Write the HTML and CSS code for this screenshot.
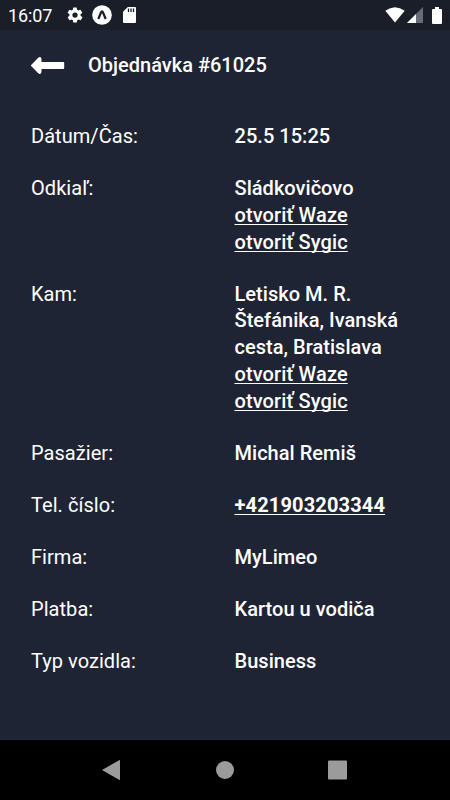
FILE: index.html
```html
<!DOCTYPE html>
<html lang="sk">
<head>
<meta charset="utf-8">
<title>Objednávka #61025</title>
<link rel="stylesheet" href="styles.css">
</head>
<body>
<div class="status">
  <span class="time">16:07</span>
  <svg class="gear" width="18" height="18" viewBox="0 0 24 24"><path fill="#fff" d="M19.4 13a7.500 7.500 0 0 0 0-2l2.100-1.700a.5.5 0 0 0 .1-.6l-2-3.500a.5.500 0 0 0-.6-.2l-2.500 1a7.300 7.300 0 0 0-1.700-1L14.400 2.400A.5.500 0 0 0 14 2h-4a.5.500 0 0 0-.5.400L9.100 5.100a7.300 7.300 0 0 0-1.700 1l-2.500-1a.5.500 0 0 0-.6.200l-2 3.500a.5.500 0 0 0 .1.600L4.600 11a7.500 7.500 0 0 0 0 2l-2.100 1.700a.5.500 0 0 0-.1.600l2 3.500a.5.500 0 0 0 .6.200l2.500-1a7.300 7.300 0 0 0 1.700 1l.4 2.600a.5.500 0 0 0 .5.400h4a.5.500 0 0 0 .5-.4l.4-2.600a7.300 7.300 0 0 0 1.700-1l2.500 1a.5.500 0 0 0 .6-.2l2-3.500a.5.500 0 0 0-.1-.6zM12 15.500a3.500 3.500 0 1 1 0-7 3.500 3.500 0 0 1 0 7z"/></svg>
  <svg class="expo" width="20" height="20" viewBox="0 0 20 20"><circle cx="10" cy="10" r="9.800" fill="#fff"/><path d="M6.300 14 9 7.500Q10 5.200 11 7.500L13.700 14" fill="none" stroke="#1a1e29" stroke-width="2.200"/></svg>
  <svg class="sd" width="13" height="16" viewBox="0 0 13 16"><path fill="#fff" d="M4.800 0H12a1 1 0 0 1 1 1v14a1 1 0 0 1-1 1H1a1 1 0 0 1-1-1V4.800z"/><path stroke="#1a1e29" stroke-width="1.300" d="M5.500 1.500v3.500M8 1.500v3.500M10.500 1.500v3.500"/></svg>
  <svg class="wifi" width="20" height="16" viewBox="0 0 20 16"><path fill="#fff" d="M.3 3.800Q10-3.400 19.700 3.800L10 15.500z"/></svg>
  <svg class="cell" width="16" height="16" viewBox="0 0 16 16"><path fill="#686b76" d="M0 16 16 0v16z"/><path fill="#fff" d="M0 16 9 7v9z"/></svg>
  <svg class="battery" width="10" height="17" viewBox="0 0 10 17"><path fill="#fff" d="M3 0h4v2h2a1 1 0 0 1 1 1v13a1 1 0 0 1-1 1H1a1 1 0 0 1-1-1V3a1 1 0 0 1 1-1h2z"/></svg>
</div>
<header>
  <svg width="34" height="17" viewBox="0 0 34 17"><path fill="#fff" d="M.4 7.700 7.200.7Q10-1 10.500 2v3h21.700q1 0 1 1v5q0 1-1 1H10.500v3q-.5 3-3.300 1.300L.4 9.300q-.8-.8 0-1.600z"/></svg>
  <h1>Objednávka #61025</h1>
</header>
<main>
  <dl>
    <div class="row"><dt>Dátum/Čas:</dt><dd>25.5 15:25</dd></div>
    <div class="row"><dt>Odkiaľ:</dt><dd>Sládkovičovo<a>otvoriť Waze</a><a>otvoriť Sygic</a></dd></div>
    <div class="row"><dt>Kam:</dt><dd><span class="address">Letisko M. R.<br>Štefánika, Ivanská<br>cesta, Bratislava</span><a>otvoriť Waze</a><a>otvoriť Sygic</a></dd></div>
    <div class="row"><dt>Pasažier:</dt><dd>Michal Remiš</dd></div>
    <div class="row"><dt>Tel. číslo:</dt><dd><a class="phone">+421903203344</a></dd></div>
    <div class="row"><dt>Firma:</dt><dd>MyLimeo</dd></div>
    <div class="row"><dt>Platba:</dt><dd>Kartou u vodiča</dd></div>
    <div class="row"><dt>Typ vozidla:</dt><dd>Business</dd></div>
  </dl>
</main>
<nav>
  <svg width="250" height="24" viewBox="0 0 250 24"><g fill="#9b9b9b"><path d="M2 12 19.500 2q.5 0 .5.500v19q0 .5-.5.500z"/><circle cx="125" cy="12" r="9"/><rect x="228" y="2.500" width="19" height="19" rx="1"/></g></svg>
</nav>
</body>
</html>
```
FILE: styles.css
```css
* { box-sizing: border-box; }
body { margin: 0; width: 450px; height: 800px; overflow: hidden; display: flex; flex-direction: column; background: #1f2434; color: #fff; font-family: Roboto, "Noto Sans", sans-serif; }
.status { height: 30px; flex: none; display: flex; align-items: center; background: #1a1e29; padding: 0 8px 0 8px; }
.time { width: 58px; font-size: 18px; letter-spacing: -0.1px; }
.expo { margin-left: 8px; }
.sd { margin-left: 11px; }
.wifi { margin-left: auto; }
.cell { margin-left: 2px; }
.battery { margin-left: 9px; }
header { display: flex; align-items: center; height: 70px; padding-left: 31px; gap: 23px; flex: none; }
h1 { margin: 0; font-size: 20px; font-weight: 500; }
main { flex: 1; padding: 22.5px 31px 0; }
dl { margin: 0; display: flex; flex-direction: column; gap: 25px; }
.row { display: grid; grid-template-columns: 203.5px 1fr; font-size: 20px; line-height: 27px; }
dt { font-weight: 400; letter-spacing: 0.05px; }
dd { margin: 0; font-weight: 500; letter-spacing: 0.03px; }
.address { display: block; line-height: 26.5px; padding-bottom: 0.5px; }
dd a { display: block; width: fit-content; letter-spacing: 0.1px; text-decoration: underline 1px; text-underline-offset: 2px; text-decoration-skip-ink: none; }
dd .phone { font-weight: 700; letter-spacing: 0.15px; }
nav { height: 60px; flex: none; background: #000; display: flex; align-items: center; justify-content: center; }
```
